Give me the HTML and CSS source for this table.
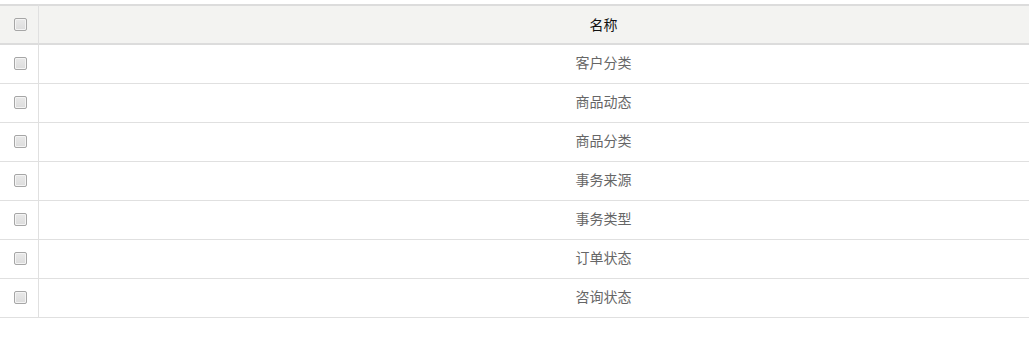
FILE: index.html
```html
<!DOCTYPE html>
<html lang="zh-CN">
<head>
<meta charset="utf-8">
<title>名称</title>
<link rel="stylesheet" href="styles.css">
</head>
<body>
<div class="wrap">
  <table class="grid">
    <thead>
      <tr>
        <th class="ck"><span class="box"></span></th>
        <th class="name">名称</th>
      </tr>
    </thead>
    <tbody>
      <tr><td class="ck"><span class="box"></span></td><td class="name">客户分类</td></tr>
      <tr><td class="ck"><span class="box"></span></td><td class="name">商品动态</td></tr>
      <tr><td class="ck"><span class="box"></span></td><td class="name">商品分类</td></tr>
      <tr><td class="ck"><span class="box"></span></td><td class="name">事务来源</td></tr>
      <tr><td class="ck"><span class="box"></span></td><td class="name">事务类型</td></tr>
      <tr><td class="ck"><span class="box"></span></td><td class="name">订单状态</td></tr>
      <tr><td class="ck"><span class="box"></span></td><td class="name">咨询状态</td></tr>
    </tbody>
  </table>
</div>
</body>
</html>
```

FILE: styles.css
```css
html, body {
  margin: 0;
  padding: 0;
  background: #fff;
}
body {
  font-family: "Noto Sans CJK SC", "Noto Sans", sans-serif;
  font-size: 14px;
}
.wrap {
  width: 100%;
  overflow: hidden;
  padding-top: 4px;
}
.grid {
  width: 1168px;
  border-collapse: separate;
  border-spacing: 0;
  table-layout: fixed;
}
.grid th, .grid td {
  padding: 0;
  box-sizing: border-box;
  vertical-align: middle;
  text-align: center;
  line-height: 20px;
}
.grid th {
  background: #f3f3f1;
  border-top: 2px solid #dcdcdc;
  border-bottom: 2px solid #dcdcdc;
  height: 41px;
  padding-bottom: 1px;
  font-weight: normal;
  color: #111;
}
.grid td {
  height: 39px;
  padding-bottom: 2px;
  border-bottom: 1px solid #e0e0e0;
  color: #666;
}
.grid td.name {
  padding-bottom: 4px;
}
.grid .ck {
  width: 39px;
  border-right: 1px solid #e0e0e0;
  text-align: left;
}
.box {
  display: block;
  width: 13px;
  height: 13px;
  margin-left: 14px;
  box-sizing: border-box;
  border: 1px solid #a6a6a6;
  border-radius: 2px;
  background: linear-gradient(#e9e9e9, #dcdcdc);
  box-shadow: inset 0 0 0 1px #f4f4f4;
}
```
